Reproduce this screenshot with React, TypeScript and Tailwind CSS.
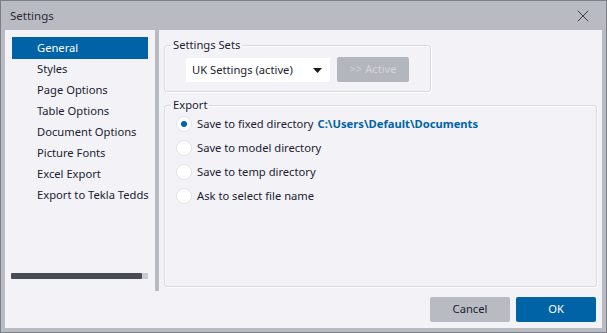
import { X } from 'lucide-react';

const items = [
  'General',
  'Styles',
  'Page Options',
  'Table Options',
  'Document Options',
  'Picture Fonts',
  'Excel Export',
  'Export to Tekla Tedds',
];

const options = [
  'Save to fixed directory',
  'Save to model directory',
  'Save to temp directory',
  'Ask to select file name',
];

const Radio = ({ checked }: { checked?: boolean }) => (
  <span className="w-[16px] h-[16px] rounded-full bg-white border border-[#e3e5ea] flex items-center justify-center shrink-0">
    {checked && <span className="w-[6px] h-[6px] rounded-full bg-[#0063a6]" />}
  </span>
);

const App = () => {
  return (
    <div
      className="w-[607px] h-[333px] bg-[#b9bbc3] border border-[#7c7f88] flex flex-col text-[11.2px] text-[#211c30] whitespace-nowrap"
      style={{ fontFamily: '"Noto Sans", "Open Sans", sans-serif' }}
    >
      {/* title bar */}
      <div className="h-[29px] flex items-center justify-between pl-[9px] pr-[13px] shrink-0">
        <span className="text-[11.5px] text-[#2a2a33]">Settings</span>
        <X className="w-[20px] h-[20px] text-[#33343a]" strokeWidth={1.1} />
      </div>

      {/* body */}
      <div className="flex-1 mx-[4px] mb-[4px] bg-[#f2f2f7] flex flex-col">
        <div className="h-[261px] flex">
          {/* left nav */}
          <div className="w-[150px] flex flex-col pt-[7px] pl-[7px] pr-[7px]">
            <div className="flex flex-col">
              {items.map((item, i) => (
                <div
                  key={item}
                  className={
                    i === 0
                      ? 'h-[22px] flex items-center pl-[25px] bg-[#0063a6] text-white'
                      : 'h-[21px] flex items-center pl-[25px]'
                  }
                >
                  {item}
                </div>
              ))}
            </div>
            <div className="mt-auto mb-[12px] ml-[-1px] flex h-[6px]">
              <div className="w-[132px] bg-[#474b53] rounded-[1px]" />
              <div className="w-[6px] bg-[#c8cad2]" />
            </div>
          </div>

          <div className="w-[4px] bg-[#b9bbc3]" />

          {/* right content */}
          <div className="flex-1 flex flex-col pl-[5px] pr-[5px] pt-[7px] gap-[5px]">
            <fieldset className="w-[254px] h-[55px] border border-[#d6d9e0] rounded-[3px] shadow-[inset_1px_1px_0_#ffffff,1px_1px_0_#ffffff] px-[21px]">
              <legend className="px-[2px] ml-[-15px] leading-[16px]">Settings Sets</legend>
              <div className="flex gap-[7px] mt-[5px]">
                <div className="w-[144px] h-[24px] bg-white flex items-center justify-between pl-[6px] pr-[8px]">
                  <span>UK Settings (active)</span>
                  <svg width="9" height="5" viewBox="0 0 9 5">
                    <path d="M0 0 L9 0 L4.5 5 Z" fill="#1a1a1a" />
                  </svg>
                </div>
                <div className="w-[72px] h-[25px] mt-[-1px] bg-[#b4b6bd] rounded-[2px] flex items-center justify-center text-[#d2d4da]">
                  &gt;&gt; Active
                </div>
              </div>
            </fieldset>

            <fieldset className="h-[190px] border border-[#d6d9e0] rounded-[3px] shadow-[inset_1px_1px_0_#ffffff,1px_1px_0_#ffffff] pl-[11px]">
              <legend className="px-[2px] ml-[-5px] leading-[16px]">Export</legend>
              <div className="flex flex-col mt-[-1px]">
                {options.map((opt, i) => (
                  <div key={opt} className="h-[24px] flex items-center gap-[5px] leading-none">
                    <Radio checked={i === 0} />
                    <span>
                      {opt}
                      {i === 0 && (
                        <span className="ml-[4px] font-bold text-[#0063a6]">
                          C:\Users\Default\Documents
                        </span>
                      )}
                    </span>
                  </div>
                ))}
              </div>
            </fieldset>
          </div>
        </div>

        {/* buttons */}
        <div className="flex justify-end gap-[6px] pr-[6px] pt-[6px]">
          <button className="w-[80px] h-[25px] bg-[#b9bbc3] rounded-[2px] text-[#211c30]">
            Cancel
          </button>
          <button className="w-[80px] h-[25px] bg-[#0063a6] rounded-[2px] text-white">
            OK
          </button>
        </div>
      </div>
    </div>
  );
};

export default App;
